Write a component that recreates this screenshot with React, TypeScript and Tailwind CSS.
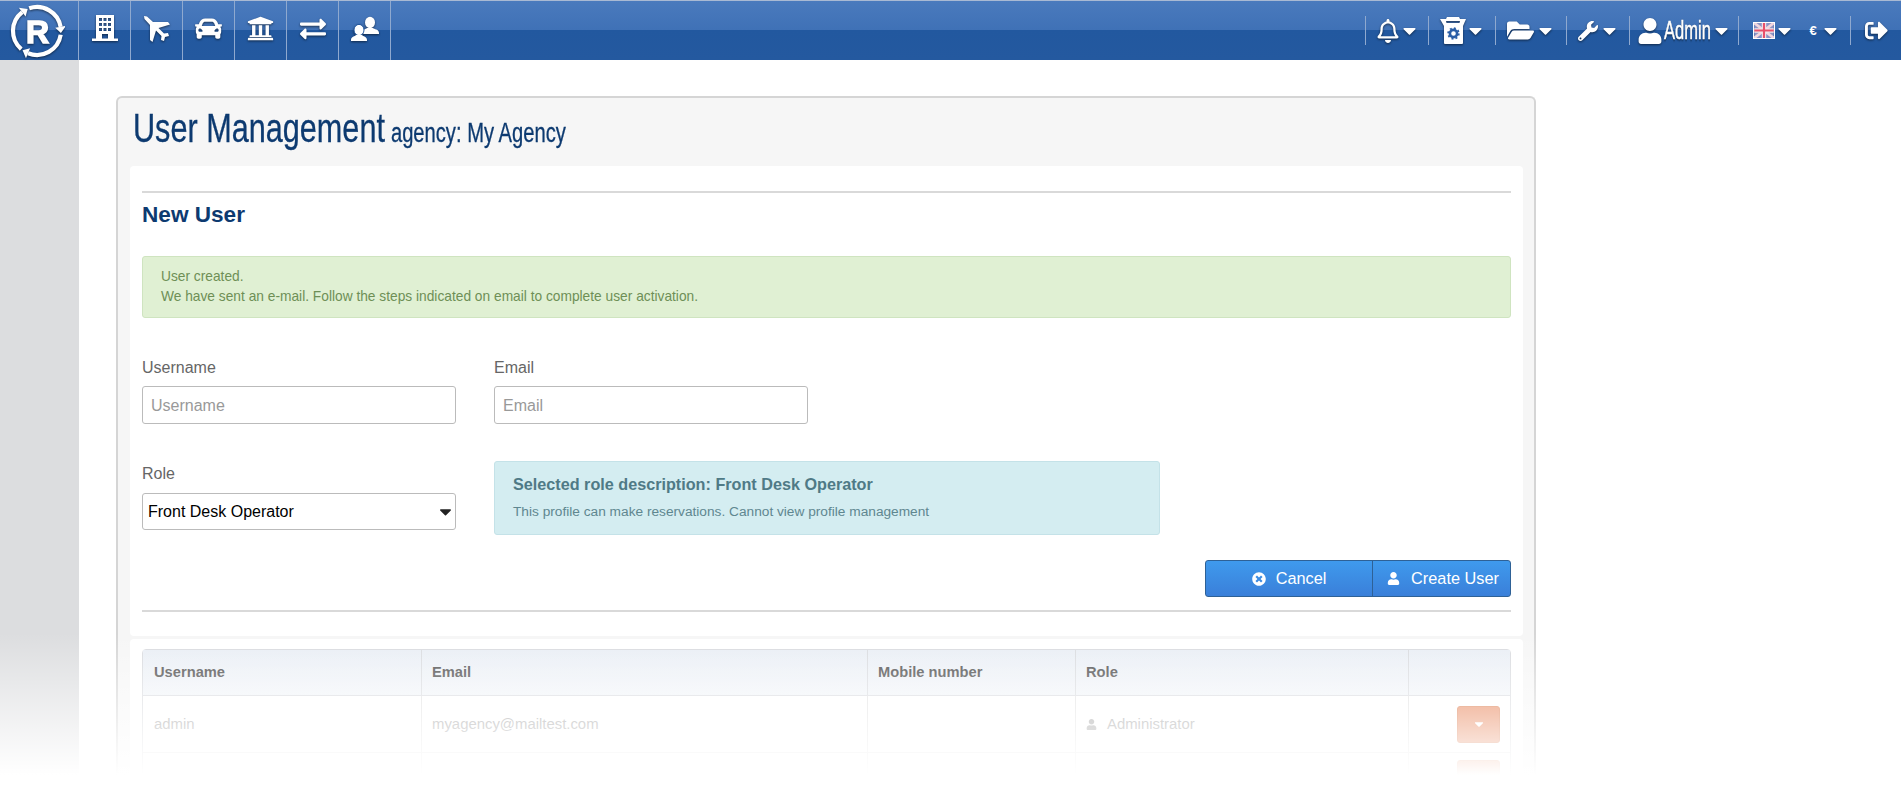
import React from 'react';
import { FaCar, FaUniversity, FaExchangeAlt, FaRegBell, FaFolderOpen, FaWrench, FaUser, FaSignOutAlt, FaCaretDown, FaTimesCircle } from 'react-icons/fa';

const shadow = 'drop-shadow-[0_1px_1px_rgba(0,0,0,0.55)]';

function polar(deg: number, r: number) {
  const a = (deg * Math.PI) / 180;
  return `${(28 + r * Math.cos(a)).toFixed(2)} ${(28 + r * Math.sin(a)).toFixed(2)}`;
}

function Logo() {
  // three clockwise arcs, each one ends in an arrow head at the next gap
  const gaps = [-113, 5, 127];
  return (
    <svg width="56" height="56" viewBox="0 0 56 56" className={shadow}>
      {gaps.map((g, i) => {
        const start = g + 4;
        const next = gaps[(i + 1) % 3];
        const end = (i === 2 ? next + 360 : next) - 15;
        return (
          <g key={g}>
            <path d={`M${polar(start, 24)} A24 24 0 0 1 ${polar(end, 24)}`} fill="none" stroke="#fff" strokeWidth="4.2" />
            <path d={`M${polar(end, 29.5)} L${polar(end + 15, 24)} L${polar(end, 18.5)} Z`} fill="#fff" />
          </g>
        );
      })}
      <text x="28.5" y="40" textAnchor="middle" fontFamily="'Liberation Sans', sans-serif" fontWeight="700" fontSize="32" fill="#fff" stroke="#fff" strokeWidth="1.5">R</text>
    </svg>
  );
}

function BuildingIcon() {
  return (
    <svg width="26" height="27" viewBox="0 0 26 27" className={shadow}>
      <rect x="0" y="23.5" width="26" height="2.5" fill="#fff" />
      <path
        fillRule="evenodd"
        fill="#fff"
        d="M4 0 H22 V24 H4 Z M7 3 v3 h3 v-3 Z M11.5 3 v3 h3 v-3 Z M16 3 v3 h3 v-3 Z M7 8 v3 h3 v-3 Z M11.5 8 v3 h3 v-3 Z M16 8 v3 h3 v-3 Z M7 13 v3 h3 v-3 Z M11.5 13 v3 h3 v-3 Z M16 13 v3 h3 v-3 Z M10 19 v5 h6 v-5 Z"
      />
    </svg>
  );
}

function PlaneIcon() {
  return (
    <svg width="28" height="28" viewBox="0 0 28 28" fill="#fff" className={shadow}>
      <path d="M1 1 L4 1.5 L10 7 L25 7 L27 9.5 L15.5 13 L21 18.5 L25 18 L26 21 L22 22 L21 26 L18 25 L18.5 21 L13 15.5 L9.5 27 L7 25 L7 10 L1.5 4 Z" />
    </svg>
  );
}

function PeopleIcon() {
  return (
    <svg width="28" height="26" viewBox="0 0 28 26" fill="#fff" className={shadow}>
      <ellipse cx="19" cy="6.5" rx="5" ry="5.8" />
      <path d="M11 17 C11 13 15 13.5 16 12 L22 12 C23 13.5 28 13 28 17 L28 18 L13 18 Z" />
      <ellipse cx="8" cy="14" rx="5" ry="5.6" fill="#fff" stroke="#24599f" strokeWidth="1" />
      <path d="M0 24 C0 20.5 4 20.5 5 19 L11 19 C12 20.5 16 20.5 16 24 L16 25 L0 25 Z" />
    </svg>
  );
}

function BinGearIcon() {
  return (
    <svg width="26" height="28" viewBox="0 0 26 28" className={shadow}>
      <path d="M0 2 L6 2 L7 0 L19 0 L20 2 L26 2 L23 9 L23 26 Q23 27 22 27 L5 27 Q4 27 4 26 L4 9 Z M6 4 L6.5 6 L19.5 6 L20 4 Z" fill="#fff" fillRule="evenodd" />
      <circle cx="13.5" cy="16.5" r="3.6" fill="none" stroke="#2a5ea6" strokeWidth="2.6" />
      <circle cx="13.5" cy="16.5" r="5.4" fill="none" stroke="#2a5ea6" strokeWidth="1.6" strokeDasharray="2 2.2" />
    </svg>
  );
}

function UkFlag() {
  return (
    <svg width="22" height="17" viewBox="0 0 22 17" className="border border-white">
      <rect width="22" height="17" fill="#8d94c4" />
      <path d="M0 0 L22 17 M22 0 L0 17" stroke="#f2d6de" strokeWidth="3" />
      <path d="M11 0 V17 M0 8.5 H22" stroke="#f2e6ea" strokeWidth="5" />
      <path d="M11 0 V17 M0 8.5 H22" stroke="#e8506a" strokeWidth="2.4" />
    </svg>
  );
}

function Caret({ className = '' }: { className?: string }) {
  return <FaCaretDown size={21} className={`text-white -mx-[1px] ${shadow} ${className}`} />;
}

function NavButton({ children }: any) {
  return <div className="w-[52px] h-full border-r border-[#8fa9cf] flex items-center justify-center pb-[4px]">{children}</div>;
}

function TopItem({ width, children }: any) {
  return (
    <div className={`${width} h-full flex items-center justify-center`}>
      {children}
    </div>
  );
}

function TopSep() {
  return <div className="w-px h-[29px] bg-[#8fa9cf]" />;
}

function Field({ label, placeholder, width }: any) {
  return (
    <div className={width}>
      <label className="block text-[16px] leading-[20px] text-[#666]">{label}</label>
      <input placeholder={placeholder} className="mt-[8px] w-full h-[38px] px-2 pt-[2px] bg-white border border-[#bbb] rounded-[3px] text-[16px] placeholder:text-[#999]" />
    </div>
  );
}

export default function App() {
  return (
    <div className="relative h-screen overflow-hidden bg-white font-['Liberation_Sans',Arial,sans-serif]">
      {/* TOP BAR */}
      <header className="h-[60px] flex items-center border-t border-[#a9b9d3] bg-[linear-gradient(to_bottom,#4a7abd_0%,#3f71b6_50%,#22589f_50%,#24599f_100%)]">
        <div className="w-[79px] h-full border-r border-[#8fa9cf] flex items-center justify-center pr-[5px]">
          <Logo />
        </div>
        <NavButton><BuildingIcon /></NavButton>
        <NavButton><PlaneIcon /></NavButton>
        <NavButton><FaCar size={27} className={`text-white ${shadow}`} /></NavButton>
        <NavButton><FaUniversity size={27} className={`text-white ${shadow}`} /></NavButton>
        <NavButton><FaExchangeAlt size={26} className={`text-white ${shadow}`} /></NavButton>
        <NavButton><PeopleIcon /></NavButton>

        <div className="ml-auto h-full flex items-center">
          <TopSep />
          <TopItem width="w-[62px]"><FaRegBell size={24} className={`text-white ${shadow}`} /><Caret /></TopItem>
          <TopSep />
          <TopItem width="w-[66px]"><BinGearIcon /><Caret /></TopItem>
          <TopSep />
          <TopItem width="w-[70px]"><FaFolderOpen size={27} className={`text-white mr-[2px] ${shadow}`} /><Caret /></TopItem>
          <TopSep />
          <TopItem width="w-[62px]"><FaWrench size={20} className={`text-white mr-[2px] ${shadow}`} /><Caret /></TopItem>
          <TopSep />
          <TopItem width="w-[108px]">
            <FaUser size={26} className={`text-white ${shadow}`} />
            <span className={`text-white text-[25px] leading-none scale-x-[0.66] -mx-[11px] [-webkit-text-stroke:0.5px_white] ${shadow}`}>Admin</span>
            <Caret />
          </TopItem>
          <TopSep />
          <TopItem width="w-[111px]">
            <div className="pl-[4px] flex items-center">
              <UkFlag />
              <Caret />
            </div>
            <span className="ml-[15px] text-white text-[13px] font-bold">€</span>
            <Caret className="ml-[3px]" />
          </TopItem>
          <TopSep />
          <TopItem width="w-[50px]"><FaSignOutAlt size={23} className={`text-white ${shadow}`} /></TopItem>
        </div>
      </header>

      <div className="flex h-[740px]">
        {/* LEFT RAIL */}
        <aside className="w-[79px] shrink-0 bg-[#dcdddf]" />

        {/* MAIN */}
        <main className="pl-[37px] pt-[36px]">
          <div className="w-[1420px] bg-[#f6f6f6] border-2 border-[#d5d5d5] rounded-t-[6px] border-b-0 pl-[12px] pr-[11px]">
            <h1 className="h-[68px] pl-[4px] pt-[6px] origin-left scale-x-[0.747] text-[#0d3a70] whitespace-nowrap leading-[48px] [-webkit-text-stroke:0.3px_#0d3a70]">
              <span className="text-[41px]">User Management</span>
              <span className="text-[27px] ml-[8px]">agency: My Agency</span>
            </h1>

            <section className="bg-white rounded-[4px] px-[12px] pt-[25px] h-[470px]">
              <div className="border-t-2 border-[#d9d9d9]" />
              <h2 className="mt-[7px] text-[22.6px] leading-[30px] font-bold text-[#0d3a70]">New User</h2>

              <div className="mt-[26px] h-[62px] pl-[18px] pt-[10px] bg-[#e0f0d3] border border-[#cfe4c0] rounded-[3px] text-[13.75px] leading-[20px] text-[#6e8f56]">
                <p>User created.</p>
                <p>We have sent an e-mail. Follow the steps indicated on email to complete user activation.</p>
              </div>

              <div className="mt-[40px] flex gap-[38px]">
                <Field label="Username" placeholder="Username" width="w-[314px]" />
                <Field label="Email" placeholder="Email" width="w-[314px]" />
              </div>

              <div className="mt-[37px] flex gap-[38px]">
                <div className="w-[314px] pt-[3px]">
                  <label className="block text-[16px] leading-[20px] text-[#666]">Role</label>
                  <div className="relative mt-[9px]">
                    <select defaultValue="Front Desk Operator" className="w-full h-[37px] pl-[5px] pr-6 appearance-none bg-white border border-[#bbb] rounded-[3px] text-[16px] text-black">
                      <option>Front Desk Operator</option>
                    </select>
                    <FaCaretDown size={19} className="absolute right-[1px] top-[9px] text-[#222]" />
                  </div>
                </div>
                <div className="w-[666px] h-[74px] pl-[18px] pt-[12px] bg-[#d4edf1] border border-[#c4e2e8] rounded-[3px]">
                  <h3 className="text-[16.2px] leading-[20px] font-bold text-[#4f7a86]">Selected role description: Front Desk Operator</h3>
                  <p className="mt-[9px] text-[13.7px] leading-[18px] text-[#5f8790]">This profile can make reservations. Cannot view profile management</p>
                </div>
              </div>

              <div className="mt-[25px] flex justify-end">
                <div className="flex h-[37px] text-[16.3px] text-white border border-[#2e6196] rounded-[3px] bg-[linear-gradient(to_bottom,#3f9aed,#3a7fd9)]">
                  <button className="w-[167px] flex items-center justify-center gap-[10px] border-r border-[#2e6196]">
                    <FaTimesCircle size={14} />Cancel
                  </button>
                  <button className="w-[137px] flex items-center justify-center gap-[11px] pl-[3px]">
                    <FaUser size={13} />Create User
                  </button>
                </div>
              </div>

              <div className="mt-[13px] border-t-2 border-[#d9d9d9]" />
            </section>

            <section className="mt-[3px] bg-white rounded-[4px] px-[12px] pt-[10px] h-[200px]">
              <table className="w-full table-fixed border-separate border-spacing-0 text-[14.9px] border border-[#d8dade] rounded-[4px]">
                <thead>
                  <tr className="h-[46px] text-left text-[14.7px] font-bold text-[#4a4a4a] bg-[linear-gradient(to_bottom,#e9eef5,#f1f4f8)]">
                    <th className="w-[279px] pl-[11px] border-b border-r border-[#d8dade]">Username</th>
                    <th className="w-[446px] pl-[10px] border-b border-r border-[#d8dade]">Email</th>
                    <th className="w-[208px] pl-[10px] border-b border-r border-[#d8dade]">Mobile number</th>
                    <th className="w-[333px] pl-[10px] border-b border-r border-[#d8dade]">Role</th>
                    <th className="border-b border-[#d8dade]" />
                  </tr>
                </thead>
                <tbody className="text-[#999]">
                  <tr className="h-[57px]">
                    <td className="pl-[11px] pt-[1px] border-b border-r border-[#e0e0e0]">admin</td>
                    <td className="pl-[10px] pt-[1px] border-b border-r border-[#e0e0e0]">myagency@mailtest.com</td>
                    <td className="border-b border-r border-[#e0e0e0]" />
                    <td className="pl-[10px] pt-[1px] border-b border-r border-[#e0e0e0]">
                      <span className="flex items-center gap-[10px]"><FaUser size={11} />Administrator</span>
                    </td>
                    <td className="border-b border-[#e0e0e0]">
                      <button className="ml-[48px] w-[43px] h-[37px] flex items-center justify-center rounded-[3px] bg-[#e67c4e] border border-[#d9703f]">
                        <FaCaretDown size={14} className="text-white" />
                      </button>
                    </td>
                  </tr>
                  <tr className="h-[57px]">
                    <td className="border-r border-[#e0e0e0]" />
                    <td className="border-r border-[#e0e0e0]" />
                    <td className="border-r border-[#e0e0e0]" />
                    <td className="pl-[10px] border-r border-[#e0e0e0]"><FaUser size={11} /></td>
                    <td>
                      <button className="ml-[48px] w-[43px] h-[37px] rounded-[3px] bg-[#e67c4e] border border-[#d9703f]" />
                    </td>
                  </tr>
                </tbody>
              </table>
            </section>
          </div>
        </main>
      </div>

      {/* bottom fade over the page */}
      <div className="absolute left-0 right-0 top-[633px] h-[167px] pointer-events-none bg-[linear-gradient(to_bottom,rgba(255,255,255,0)_0%,#fff_85%)]" />
    </div>
  );
}
